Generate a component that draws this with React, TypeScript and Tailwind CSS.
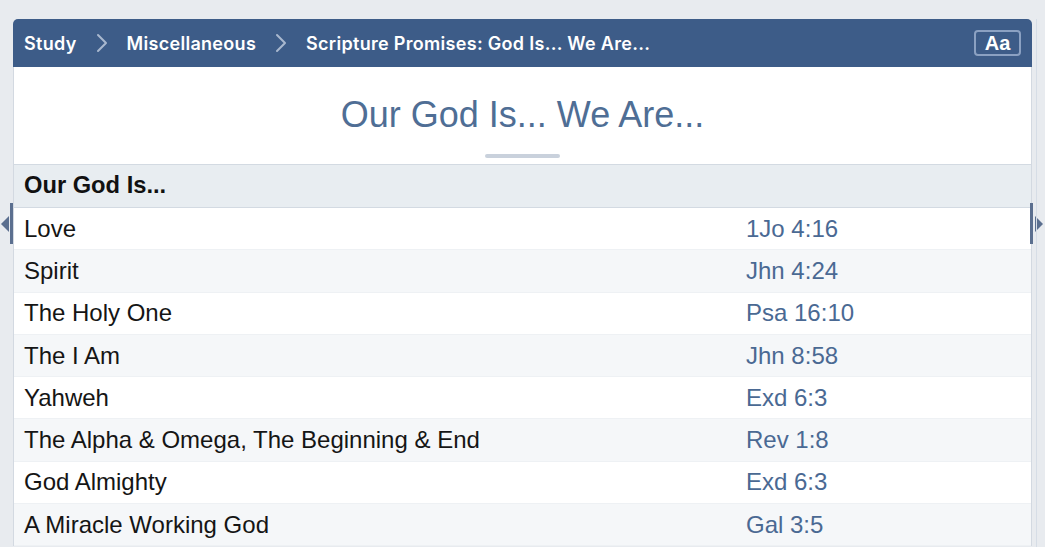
type Promise = { name: string; ref: string };

const items: Promise[] = [
  { name: 'Love', ref: '1Jo 4:16' },
  { name: 'Spirit', ref: 'Jhn 4:24' },
  { name: 'The Holy One', ref: 'Psa 16:10' },
  { name: 'The I Am', ref: 'Jhn 8:58' },
  { name: 'Yahweh', ref: 'Exd 6:3' },
  { name: 'The Alpha & Omega, The Beginning & End', ref: 'Rev 1:8' },
  { name: 'God Almighty', ref: 'Exd 6:3' },
  { name: 'A Miracle Working God', ref: 'Gal 3:5' },
];

const crumbs = ['Study', 'Miscellaneous', 'Scripture Promises: God Is... We Are...'];

function Chevron() {
  return (
    <svg width="12" height="20" viewBox="0 0 12 20" className="ml-[19px] mr-[19px] text-[#a9b8cf]">
      <polyline points="2,2 10,10 2,18" fill="none" stroke="currentColor" strokeWidth="2" strokeLinecap="round" strokeLinejoin="round" />
    </svg>
  );
}

export default function App() {
  return (
    <div className="h-[547px] w-[1045px] overflow-hidden bg-[#e8ebef] font-['Liberation_Sans',Arial,sans-serif]">
      <div className="flex pt-[19px]">
        {/* left rail */}
        <div className="relative w-[13px] shrink-0">
          <div className="absolute left-[1px] top-[197px] h-0 w-0 border-y-[8px] border-r-[8px] border-y-transparent border-r-[#5b6f8f]" />
          <div className="absolute left-[10px] top-[184px] h-[41px] w-[3px] bg-[#5b6f8f]" />
        </div>

        {/* card */}
        <div className="w-[1019px] shrink-0">
          <div className="flex h-[48px] items-center justify-between rounded-t-[5px] bg-[#3d5c88] pl-[11px] pr-[11px] font-['Inter',sans-serif] text-[18px] font-semibold text-white">
            <div className="flex items-center">
              {crumbs.map((c, i) => (
                <div key={c} className="flex items-center">
                  {i > 0 && <Chevron />}
                  <span className="tracking-[0.3px]">{c}</span>
                </div>
              ))}
            </div>
            <div className="flex h-[26px] w-[47px] items-center justify-center rounded-[4px] border-2 border-[#8ba1c2] font-['Liberation_Sans',Arial,sans-serif] text-[20px] font-bold leading-none">
              Aa
            </div>
          </div>

          <div className="border-x border-[#d3d9e1] bg-white">
            {/* title */}
            <div className="flex h-[97px] flex-col items-center pt-[27px]">
              <h1 className="text-[36px] leading-[42px] text-[#4f6e95]">Our God Is... We Are...</h1>
              <div className="mt-[18px] h-[4px] w-[75px] rounded-full bg-[#c9d1dc]" />
            </div>

            {/* section header */}
            <div className="flex h-[44px] items-center border-y border-[#d3dae2] bg-[#e8edf1] px-[10px] text-[23.7px] font-bold text-[#111]">
              Our God Is...
            </div>

            {items.map((it, i) => (
              <div
                key={it.name + i}
                className={`flex h-[42.3px] items-center border-b border-[#eef1f4] px-[10px] text-[24px] ${i % 2 === 0 ? 'bg-white' : 'bg-[#f5f7f9]'}`}
              >
                <span className="w-[722px] text-[#151515]">{it.name}</span>
                <span className="text-[#4a6993]">{it.ref}</span>
              </div>
            ))}
          </div>
        </div>

        {/* right rail */}
        <div className="relative w-[13px] shrink-0">
          <div className="absolute left-[-2px] top-[184px] h-[41px] w-[3px] bg-[#5b6f8f]" />
          <div className="absolute left-[3px] top-[197px] h-0 w-0 border-y-[8px] border-l-[8px] border-y-transparent border-l-[#5b6f8f]" />
          <div className="absolute left-[4px] top-0 h-[600px] w-[1px] bg-[#d6dde6]" />
        </div>
      </div>
    </div>
  );
}
